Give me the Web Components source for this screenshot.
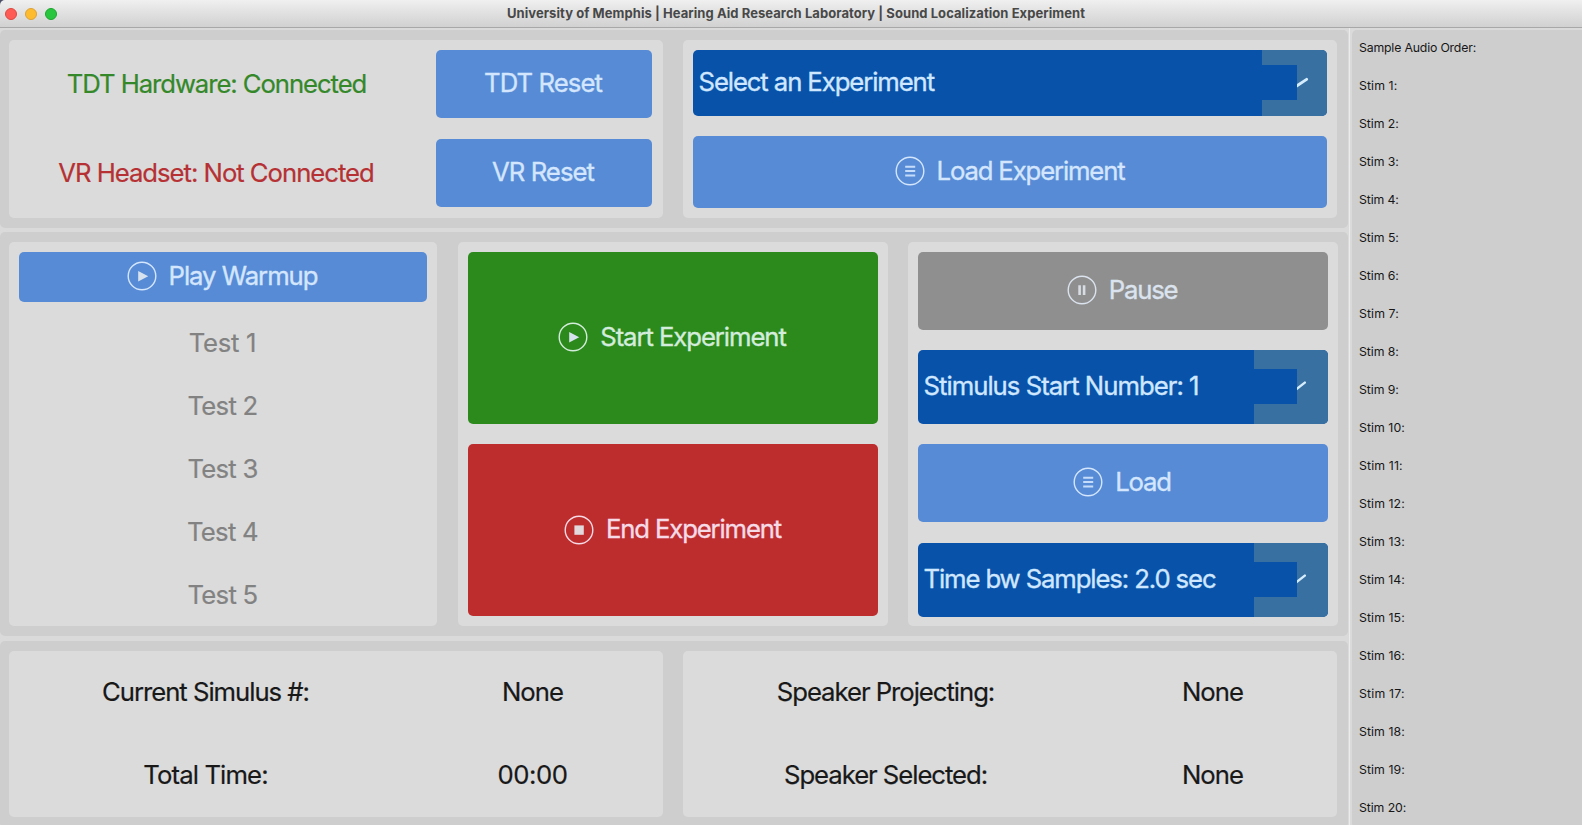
<!DOCTYPE html>
<html lang="en">
<head>
<meta charset="utf-8">
<title>Sound Localization Experiment</title>
<style>
html,body{margin:0;height:100%;overflow:hidden;background:#dadada;font-family:Inter,"Liberation Sans",sans-serif}
</style>
</head>
<body>
<experiment-app></experiment-app>
<script>
const define = (name, html, setup) => {
  const tpl = document.createElement('template');
  tpl.innerHTML = html;
  customElements.define(name, class extends HTMLElement {
    connectedCallback() {
      if (this.shadowRoot) return;
      this.attachShadow({mode: 'open'}).append(tpl.content.cloneNode(true));
      if (setup) setup(this, this.shadowRoot);
    }
  });
};

/* Single line of text whose tracking is tuned to a given advance width. */
define('fit-text', `
<style>:host{display:inline-block;white-space:nowrap;line-height:1.2;flex:none}</style><slot></slot>`, el => {
  const w = parseFloat(el.getAttribute('w'));
  const n = el.textContent.length;
  if (w) el.style.letterSpacing = ((w - el.getBoundingClientRect().width) / n).toFixed(3) + 'px';
});

const glyphs = {
  play: '<path d="M11.2 10v10.6l10-5.3z" fill="#d6e2ee"/>',
  stop: '<rect x="10.4" y="10.4" width="9.4" height="9.4" fill="#e2d9dd"/>',
  pause: '<path d="M12.6 10.3v9.6M17.1 10.3v9.6" stroke="#d8dde3" stroke-width="2.6"/>',
  list: '<path d="M10.2 10.7h10M10.2 15.1h10M10.2 19.4h10" stroke="#c5ddfa" stroke-width="2"/>'
};
define('round-icon', `
<style>:host{display:block;width:30px;height:30px;flex:none}svg{display:block}</style>
<svg width="30" height="30" viewBox="0 0 30 30" fill="none"><circle cx="15" cy="15" r="13.8" stroke="currentColor" stroke-width="1.4"/><g></g></svg>`,
(el, root) => { root.querySelector('g').innerHTML = glyphs[el.getAttribute('kind')]; });

define('push-button', `
<style>
:host{display:flex;align-items:center;justify-content:center;gap:12px;border-radius:5px;background:#588bd5;color:#d3e6fd;font-size:25.7px;-webkit-text-stroke:.35px;box-sizing:border-box;padding:0 2px 2px 0}
:host([tone=green]){background:#2b8a1b;color:#d3ecdc}
:host([tone=red]){background:#bd2d2e;color:#f6dbe6}
:host([tone=gray]){background:#8f8f8f;color:#dbe3ee}
</style><slot></slot>`);

define('combo-box', `
<style>
:host{display:flex;justify-content:space-between;border-radius:5px;overflow:hidden;background:#0852a9;color:#cfe7ff;font-size:25.7px;-webkit-text-stroke:.35px;--drop:74px;--cover:43px;--top:19px}
:host([wide]){--drop:65px;--cover:35px;--top:15px}
.label{display:flex;align-items:center;padding:0 0 2px 5.5px}
.drop{position:relative;width:var(--drop);background:#3871a1}
.cover{position:absolute;left:0;top:var(--top);width:var(--cover);height:35px;background:#0852a9}
svg{position:absolute;left:var(--cover);top:calc(var(--top) + 10px)}
</style>
<div class="label"><slot></slot></div>
<div class="drop"><div class="cover"></div><svg width="14" height="16" viewBox="0 0 14 16"><path fill="none" stroke="#d6ecff" stroke-linecap="round"/></svg></div>`,
(el, root) => {
  const p = root.querySelector('path'), wide = el.hasAttribute('wide');
  p.setAttribute('d', wide ? 'M-2 12.2 9.6 4.4' : 'M-2 11.4 7.8 3.6');
  p.setAttribute('stroke-width', wide ? 2.9 : 2.4);
});

define('panel-box', `<style>:host{display:grid;background:#dbdbdb;border-radius:5px;padding:10px;box-sizing:border-box}</style><slot></slot>`);
define('panel-row', `<style>:host{display:grid;background:#cecece;border-radius:5px;padding:10px 10px 10px 9px;box-sizing:border-box}</style><slot></slot>`);
define('text-cell', `<style>:host{display:flex;align-items:center;justify-content:center;font-size:25.7px;-webkit-text-stroke:.2px}</style><slot></slot>`);

define('title-bar', `
<style>
:host{display:flex;align-items:center;height:28px;box-sizing:border-box;border-bottom:1px solid #a8a8a8;background:linear-gradient(#f0f0f0,#e6e6e6 30%,#d1d1d1);border-top-left-radius:5px;padding:0 0 0 5px;font-size:13px;font-weight:700;color:#484848}
i{width:12px;height:12px;border-radius:50%;margin-right:8px;box-sizing:border-box;border:1px solid;flex:none}
.r{background:#fe5b54;border-color:#df4640}.y{background:#fdbc2e;border-color:#dea032}.g{background:#28c63f;border-color:#1ba62d}
.t{flex:1;display:flex;justify-content:center;padding:1px 55px 0 0}
</style>
<i class="r"></i><i class="y"></i><i class="g"></i><div class="t"><slot></slot></div>`);

define('stim-list', `
<style>
:host{display:flex;flex-direction:column;background:#cecece;border-radius:5px 0 0 5px;padding-left:7px;font-size:12.3px;color:#171717;box-sizing:border-box}
div{height:38px;flex:none;display:flex;align-items:center}
div:first-of-type{margin-top:-1px}
</style>`, (el, root) => {
  const add = (t, w) => {
    const d = document.createElement('div');
    d.innerHTML = `<fit-text w="${w}">${t}</fit-text>`;
    root.append(d);
  };
  add('Sample Audio Order:', 117);
  for (let i = 1; i <= 20; i++) add(`Stim ${i}:`, i === 1 ? 38.3 : i < 10 ? 39.8 : i === 11 ? 43.8 : i === 20 ? 47.2 : 45.8);
});

define('experiment-app', `
<style>
:host{display:flex;flex-direction:column;height:825px;width:1582px;overflow:hidden;background:linear-gradient(#4a4d65,#4a4d65) 0 0/6px 6px no-repeat,#dadada}
.body{flex:1;min-height:0;display:grid;grid-template-columns:1347px 1fr}
.main{display:grid;grid-template-rows:198px 405px 187px;row-gap:4px;padding-top:2px}
.side{display:grid;padding:2px 0 0 2px;border-left:1px solid #ebebeb;margin-left:2px}
.halves{grid-template-columns:654px 654px;column-gap:20px}
.thirds{grid-template-columns:428px 431px 430px;column-gap:20px;justify-content:start;grid-template-rows:384px;margin-bottom:1px}
.thirds panel-box:nth-child(2){margin-left:1px}
.status{grid-template-columns:417px 216px;grid-template-rows:68px 68px;row-gap:21px}
.exp{grid-template-rows:66px 72px;row-gap:20px}
.tests{grid-template-rows:50px repeat(5,63px);padding-bottom:0;align-content:start;color:#828282}
.tests text-cell{transform:translateY(9.5px);padding-right:1px}
.run{grid-template-rows:172px 172px;row-gap:20px}
.ctl{grid-template-rows:78px 74px 78px 74px;row-gap:20px}
.ctl combo-box:last-child{margin-top:1px;margin-bottom:-1px}
.nums{grid-template-rows:83px 83px;padding:0;color:#181818}
.na{grid-template-columns:393px 261px}
.nb{grid-template-columns:405px 249px}
.g{color:#348829}.r{color:#b63134}
</style>
<title-bar><fit-text w="578">University of Memphis | Hearing Aid Research Laboratory | Sound Localization Experiment</fit-text></title-bar>
<div class="body">
 <div class="main">
  <panel-row class="halves">
   <panel-box class="status">
    <text-cell class="g" style="padding-right:22px"><fit-text w="299.5">TDT Hardware: Connected</fit-text></text-cell>
    <push-button><fit-text w="118">TDT Reset</fit-text></push-button>
    <text-cell class="r" style="padding-right:23px"><fit-text w="315.5">VR Headset: Not Connected</fit-text></text-cell>
    <push-button><fit-text w="102">VR Reset</fit-text></push-button>
   </panel-box>
   <panel-box class="exp">
    <combo-box wide><fit-text w="235.5">Select an Experiment</fit-text></combo-box>
    <push-button style="padding-right:1px"><round-icon kind="list"></round-icon><fit-text w="188">Load Experiment</fit-text></push-button>
   </panel-box>
  </panel-row>
  <panel-row class="thirds">
   <panel-box class="tests">
    <push-button><round-icon kind="play"></round-icon><fit-text w="149">Play Warmup</fit-text></push-button>
    <text-cell><fit-text w="67.5">Test 1</fit-text></text-cell>
    <text-cell><fit-text w="70">Test 2</fit-text></text-cell>
    <text-cell><fit-text w="70">Test 3</fit-text></text-cell>
    <text-cell><fit-text w="71">Test 4</fit-text></text-cell>
    <text-cell><fit-text w="70">Test 5</fit-text></text-cell>
   </panel-box>
   <panel-box class="run">
    <push-button tone="green"><round-icon kind="play"></round-icon><fit-text w="185.5">Start Experiment</fit-text></push-button>
    <push-button tone="red" style="padding:0 1px 1px 0"><round-icon kind="stop"></round-icon><fit-text w="175">End Experiment</fit-text></push-button>
   </panel-box>
   <panel-box class="ctl">
    <push-button tone="gray"><round-icon kind="pause"></round-icon><fit-text w="68.5">Pause</fit-text></push-button>
    <combo-box><fit-text w="275">Stimulus Start Number: 1</fit-text></combo-box>
    <push-button><round-icon kind="list"></round-icon><fit-text w="55.5">Load</fit-text></push-button>
    <combo-box><fit-text w="292">Time bw Samples: 2.0 sec</fit-text></combo-box>
   </panel-box>
  </panel-row>
  <panel-row class="halves" style="grid-template-rows:166px">
   <panel-box class="nums na">
    <text-cell><fit-text w="207">Current Simulus #:</fit-text></text-cell><text-cell><fit-text w="61">None</fit-text></text-cell>
    <text-cell><fit-text w="124.5">Total Time:</fit-text></text-cell><text-cell><fit-text w="70">00:00</fit-text></text-cell>
   </panel-box>
   <panel-box class="nums nb">
    <text-cell><fit-text w="217.5">Speaker Projecting:</fit-text></text-cell><text-cell><fit-text w="61">None</fit-text></text-cell>
    <text-cell><fit-text w="203">Speaker Selected:</fit-text></text-cell><text-cell><fit-text w="61">None</fit-text></text-cell>
   </panel-box>
  </panel-row>
 </div>
 <div class="side"><stim-list></stim-list></div>
</div>`);
</script>
</body>
</html>
